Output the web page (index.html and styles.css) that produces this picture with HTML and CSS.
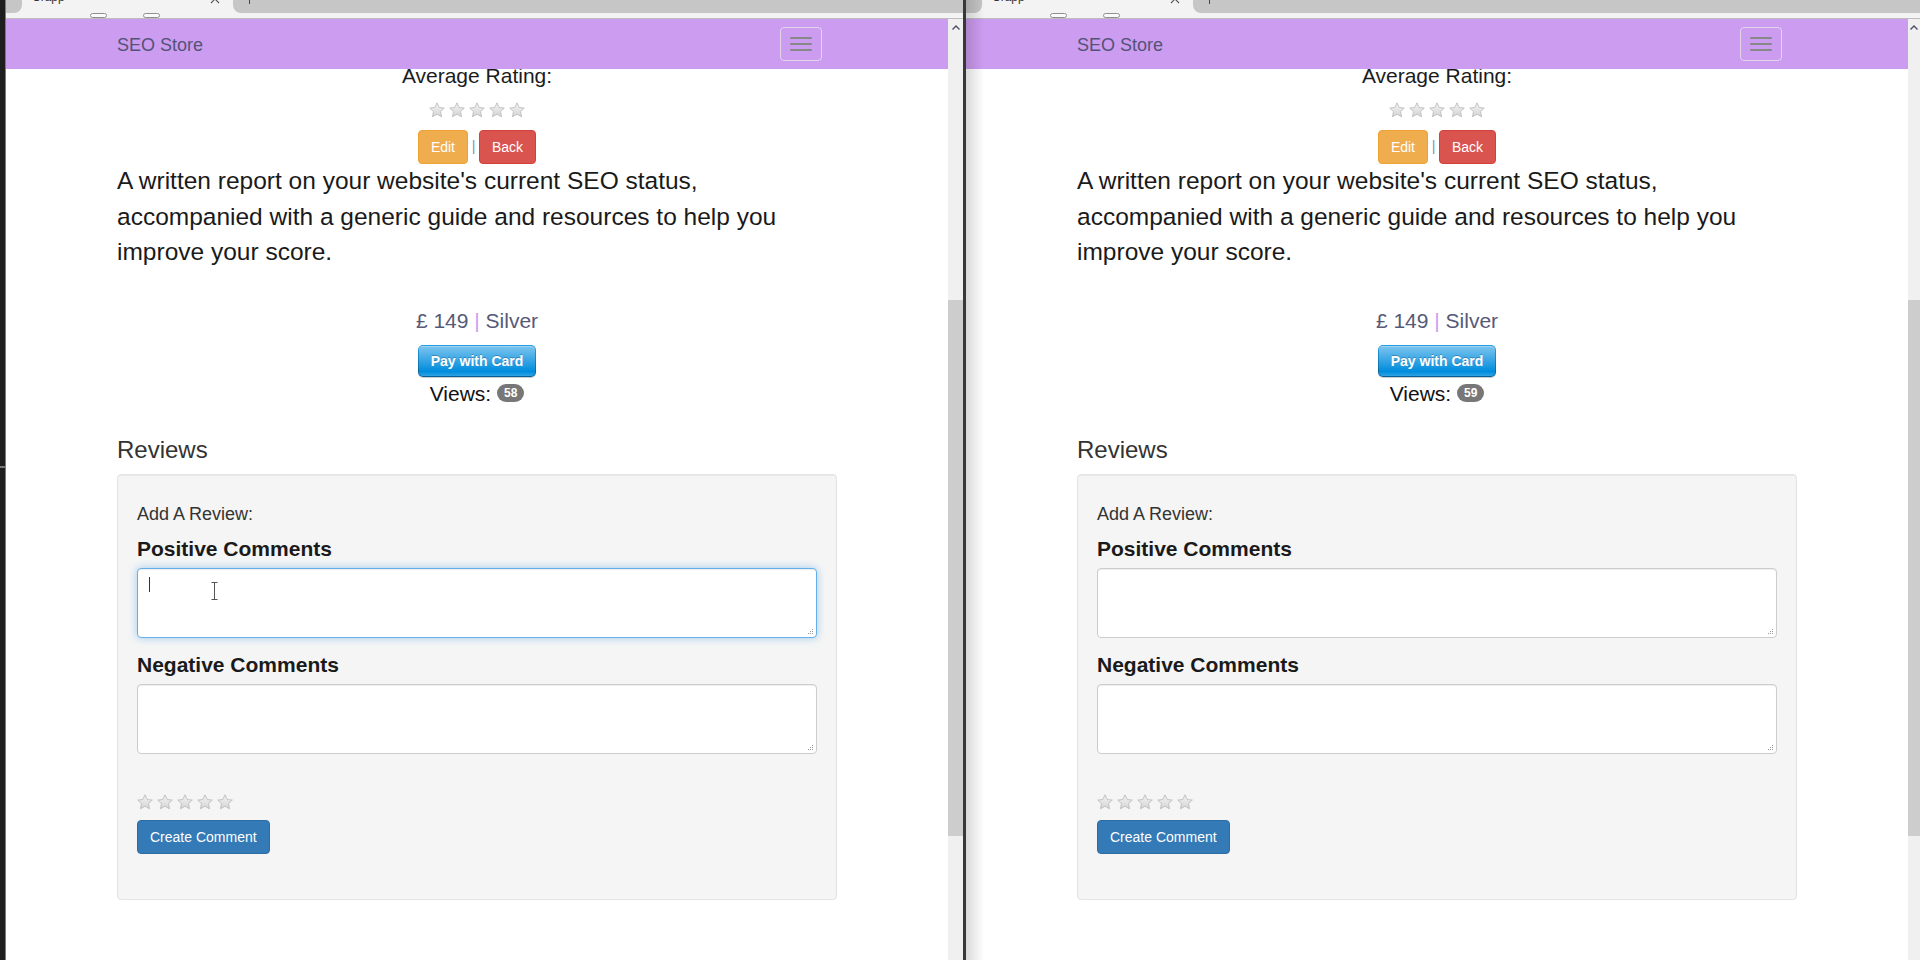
FILE: index.html
```html
<!DOCTYPE html>
<html lang="en">
<head>
<meta charset="utf-8">
<title>SEO Store</title>
<link rel="stylesheet" href="styles.css">
</head>
<body>
<svg class="sprite" width="0" height="0" aria-hidden="true">
  <defs>
    <linearGradient id="starfill" x1="0" y1="0" x2="0" y2="1">
      <stop offset="0" stop-color="#f4f4f4"/>
      <stop offset="1" stop-color="#d4d4d4"/>
    </linearGradient>
    <symbol id="star" viewBox="0 0 16 16">
      <polygon points="8,0.8 10.2,5.5 15.3,6.1 11.5,9.5 12.6,14.8 8,12.2 3.4,14.8 4.5,9.5 0.7,6.1 5.8,5.5" fill="url(#starfill)" stroke="#bdbdbd" stroke-width="0.9" stroke-linejoin="round"/>
    </symbol>
    <symbol id="grip" viewBox="0 0 7 7">
      <rect x="5" y="1" width="1" height="1" fill="#9a9a9a"/>
      <rect x="3" y="3" width="1" height="1" fill="#9a9a9a"/>
      <rect x="5" y="3" width="1" height="1" fill="#9a9a9a"/>
      <rect x="1" y="5" width="1" height="1" fill="#9a9a9a"/>
      <rect x="3" y="5" width="1" height="1" fill="#9a9a9a"/>
      <rect x="5" y="5" width="1" height="1" fill="#9a9a9a"/>
    </symbol>
  </defs>
</svg>

<div class="desktop">
  <!-- LEFT WINDOW -->
  <div class="win win-left">
    <div class="edge"></div>
    <div class="win-col">
      <div class="tabstrip">
        <div class="tabrow">
          <div class="tab-prev"></div>
          <div class="tab-active">
            <span class="tab-title">Crapp</span>
            <svg class="tab-close" width="10" height="10" viewBox="0 0 10 10"><path d="M1 1L9 9M9 1L1 9" stroke="#555" stroke-width="1.1"/></svg>
          </div>
          <div class="tab-rest"><span class="addr-caret"></span></div>
        </div>
        <div class="pillrow"><span class="pill"></span><span class="pill"></span></div>
      </div>
      <div class="body-row">
        <div class="viewport">
          <nav class="navbar">
            <div class="nav-inner">
              <span class="brand">SEO Store</span>
              <button class="toggle" aria-label="Toggle navigation"><span class="bar"></span><span class="bar"></span><span class="bar"></span></button>
            </div>
          </nav>
          <main class="page">
            <div class="container">
              <section class="summary">
                <p class="avg">Average Rating:</p>
                <div class="stars stars-center">
                  <svg class="star"><use href="#star"/></svg><svg class="star"><use href="#star"/></svg><svg class="star"><use href="#star"/></svg><svg class="star"><use href="#star"/></svg><svg class="star"><use href="#star"/></svg>
                </div>
                <div class="actions">
                  <a class="btn btn-warning">Edit</a><span class="pipe">|</span><a class="btn btn-danger">Back</a>
                </div>
              </section>
              <p class="desc">A written report on your website's current SEO status,<br>accompanied with a generic guide and resources to help you improve your score.</p>
              <section class="purchase">
                <p class="price">£ 149 <span class="sep">|</span> Silver</p>
                <button class="stripe-btn"><span>Pay with Card</span></button>
                <p class="views">Views: <span class="badge">58</span></p>
              </section>
              <h3 class="reviews-title">Reviews</h3>
              <div class="well">
                <p class="add-review">Add A Review:</p>
                <label class="field-label">Positive Comments</label>
                <div class="ta-wrap">
                  <textarea class="ta is-focused"></textarea>
                  <span class="caret"></span>
                  <svg class="ibeam" width="7" height="18" viewBox="0 0 7 18"><path d="M0.5 0.5H6.5M3.5 0.5V17.5M0.5 17.5H6.5" stroke="#555" stroke-width="1" fill="none"/></svg>
                  <svg class="grip"><use href="#grip"/></svg>
                </div>
                <label class="field-label field-gap">Negative Comments</label>
                <div class="ta-wrap">
                  <textarea class="ta"></textarea>
                  <svg class="grip"><use href="#grip"/></svg>
                </div>
                <div class="stars stars-left">
                  <svg class="star"><use href="#star"/></svg><svg class="star"><use href="#star"/></svg><svg class="star"><use href="#star"/></svg><svg class="star"><use href="#star"/></svg><svg class="star"><use href="#star"/></svg>
                </div>
                <button class="btn btn-primary create">Create Comment</button>
              </div>
            </div>
          </main>
        </div>
        <div class="scrollbar sb-left">
          <div class="sb-arrow"><svg width="8" height="5" viewBox="0 0 8 5"><path d="M0.5 4.5L4 1L7.5 4.5" stroke="#4d4d6a" stroke-width="1.4" fill="none"/></svg></div>
          <div class="sb-thumb"></div>
        </div>
      </div>
    </div>
  </div>

  <div class="divider"></div>

  <!-- RIGHT WINDOW -->
  <div class="win win-right">
    <div class="win-col">
      <div class="tabstrip">
        <div class="tabrow">
          <div class="tab-prev"></div>
          <div class="tab-active">
            <span class="tab-title">Crapp</span>
            <svg class="tab-close" width="10" height="10" viewBox="0 0 10 10"><path d="M1 1L9 9M9 1L1 9" stroke="#555" stroke-width="1.1"/></svg>
          </div>
          <div class="tab-rest"><span class="addr-caret"></span></div>
        </div>
        <div class="pillrow"><span class="pill"></span><span class="pill"></span></div>
      </div>
      <div class="body-row">
        <div class="viewport">
          <nav class="navbar">
            <div class="nav-inner">
              <span class="brand">SEO Store</span>
              <button class="toggle" aria-label="Toggle navigation"><span class="bar"></span><span class="bar"></span><span class="bar"></span></button>
            </div>
          </nav>
          <main class="page">
            <div class="container">
              <section class="summary">
                <p class="avg">Average Rating:</p>
                <div class="stars stars-center">
                  <svg class="star"><use href="#star"/></svg><svg class="star"><use href="#star"/></svg><svg class="star"><use href="#star"/></svg><svg class="star"><use href="#star"/></svg><svg class="star"><use href="#star"/></svg>
                </div>
                <div class="actions">
                  <a class="btn btn-warning">Edit</a><span class="pipe">|</span><a class="btn btn-danger">Back</a>
                </div>
              </section>
              <p class="desc">A written report on your website's current SEO status,<br>accompanied with a generic guide and resources to help you improve your score.</p>
              <section class="purchase">
                <p class="price">£ 149 <span class="sep">|</span> Silver</p>
                <button class="stripe-btn"><span>Pay with Card</span></button>
                <p class="views">Views: <span class="badge">59</span></p>
              </section>
              <h3 class="reviews-title">Reviews</h3>
              <div class="well">
                <p class="add-review">Add A Review:</p>
                <label class="field-label">Positive Comments</label>
                <div class="ta-wrap">
                  <textarea class="ta"></textarea>
                  <svg class="grip"><use href="#grip"/></svg>
                </div>
                <label class="field-label field-gap">Negative Comments</label>
                <div class="ta-wrap">
                  <textarea class="ta"></textarea>
                  <svg class="grip"><use href="#grip"/></svg>
                </div>
                <div class="stars stars-left">
                  <svg class="star"><use href="#star"/></svg><svg class="star"><use href="#star"/></svg><svg class="star"><use href="#star"/></svg><svg class="star"><use href="#star"/></svg><svg class="star"><use href="#star"/></svg>
                </div>
                <button class="btn btn-primary create">Create Comment</button>
              </div>
            </div>
          </main>
        </div>
        <div class="scrollbar sb-right">
          <div class="sb-arrow"><svg width="8" height="5" viewBox="0 0 8 5"><path d="M0.5 4.5L4 1L7.5 4.5" stroke="#4d4d6a" stroke-width="1.4" fill="none"/></svg></div>
          <div class="sb-thumb"></div>
        </div>
      </div>
    </div>
  </div>
</div>
</body>
</html>
```

FILE: styles.css
```css
* { box-sizing: border-box; }
html, body { margin: 0; padding: 0; }
body {
  width: 1920px;
  height: 960px;
  overflow: hidden;
  background: #1e1e1e;
  font-family: "Liberation Sans", Arial, Helvetica, sans-serif;
  font-size: 14px;
  line-height: 1.42857;
  color: #333;
}
.sprite { position: absolute; width: 0; height: 0; overflow: hidden; }

.desktop { display: flex; height: 960px; }
.win { display: flex; height: 100%; position: relative; background: #fff; }
.win-left { width: 963px; flex: none; }
.win-right { flex: 1; min-width: 0; }
.win-right::before {
  content: "";
  position: absolute;
  left: 0; top: 0; bottom: 0;
  width: 18px;
  background: linear-gradient(to right, rgba(0,0,0,0.15), rgba(0,0,0,0));
  z-index: 5;
  pointer-events: none;
}
.edge {
  width: 6px;
  flex: none;
  border-right: 1px solid #7b7b7b;
  background: linear-gradient(#1e1e1e 0, #1e1e1e 466px, #7a7a7a 466px, #7a7a7a 468px, #1e1e1e 468px);
}
.divider { width: 3px; flex: none; background: #383838; }
.win-col { flex: 1; min-width: 0; display: flex; flex-direction: column; }

/* browser tab strip (cut off at top) */
.tabstrip {
  height: 19px;
  flex: none;
  background: #f3f3f3;
  border-bottom: 1px solid #bdbdbd;
  display: flex;
  flex-direction: column;
}
.tabrow { height: 13px; display: flex; }
.tab-prev { width: 16px; background: #c6c6c6; border-bottom-right-radius: 8px; }
.tab-active {
  width: 211px;
  display: flex;
  justify-content: space-between;
  align-items: flex-start;
  overflow: hidden;
  padding: 0 13px 0 10px;
}
.tab-title { font-size: 12px; line-height: 12px; margin-top: -9px; color: #333; }
.tab-close { margin-top: -6px; }
.tab-rest { flex: 1; background: #c6c6c6; border-bottom-left-radius: 8px; padding-left: 16px; }
.addr-caret { display: block; width: 1px; height: 4px; background: #444; }
.pillrow { height: 5px; display: flex; gap: 36px; padding-left: 84px; }
.pill { width: 17px; height: 5px; border: 1px solid #8f8f8f; border-radius: 3px; background: #fbfbfb; }

.body-row { flex: 1; display: flex; min-height: 0; }
.viewport { width: 942px; flex: none; position: relative; overflow: hidden; background: #fff; }

/* scrollbars */
.scrollbar { flex: 1; background: #f0f0f0; display: flex; flex-direction: column; }
.sb-arrow { height: 17px; display: flex; justify-content: center; align-items: center; }
.sb-thumb { margin-top: 264px; height: 536px; background: #cdcdcd; }

/* navbar (fixed top, content scrolls beneath) */
.navbar {
  position: absolute;
  top: 0; left: 0; right: 0;
  height: 50px;
  background: #cc9cf1;
  z-index: 2;
}
.nav-inner {
  width: 720px;
  height: 100%;
  margin: 0 auto;
  display: flex;
  align-items: center;
  justify-content: space-between;
}
.brand { font-size: 18px; line-height: 20px; padding-top: 2px; color: #535377; }
.toggle {
  width: 42px;
  height: 34px;
  margin-right: 15px;
  padding: 0;
  border: 1px solid #e2d6ec;
  border-radius: 4px;
  background: transparent;
  display: flex;
  flex-direction: column;
  align-items: center;
  justify-content: center;
  gap: 4px;
}
.bar { display: block; width: 22px; height: 2px; border-radius: 1px; background: #888; }

/* page */
.page { padding-top: 42px; }
.container { width: 720px; margin: 0 auto; }

.summary { text-align: center; }
.avg { margin: 0; font-size: 21px; line-height: 30px; color: #1c1c1c; }
.stars { display: flex; gap: 4px; height: 16px; }
.stars-center { justify-content: center; margin-top: 11px; }
.star { width: 16px; height: 16px; display: block; }
.actions { display: flex; justify-content: center; align-items: center; margin-top: 12px; }
.pipe { width: 11px; text-align: center; font-size: 14px; color: #6f93bb; }

.btn {
  display: inline-block;
  padding: 6px 12px;
  font-family: inherit;
  font-size: 14px;
  line-height: 20px;
  border: 1px solid transparent;
  border-radius: 4px;
  color: #fff;
  text-decoration: none;
  cursor: pointer;
}
.btn-warning { background: #f0ad4e; border-color: #eea236; }
.btn-danger { background: #d9534f; border-color: #d43f3a; }
.btn-primary { background: #337ab7; border-color: #2e6da4; }

.desc { margin: -1px 0 0; font-size: 24.5px; line-height: 35.5px; color: #1a1a1a; }

.purchase { text-align: center; margin-top: 36px; }
.price { margin: 0; font-size: 21px; line-height: 30px; color: #565a78; }
.sep { color: #cc9cf1; }
.stripe-btn {
  display: inline-block;
  margin-top: 9px;
  padding: 1px;
  border: 0;
  border-radius: 5px;
  background: linear-gradient(#28a0e5, #015e94);
  box-shadow: 0 1px 0 rgba(0,0,0,0.2);
  cursor: pointer;
  vertical-align: top;
}
.stripe-btn span {
  display: block;
  height: 30px;
  padding: 0 12px;
  line-height: 30px;
  border-radius: 4px;
  background: linear-gradient(#7dc5ee, #008cdd 85%, #30a2e4);
  box-shadow: inset 0 1px 0 rgba(255,255,255,0.25);
  color: #fff;
  font-family: "Liberation Sans", Arial, sans-serif;
  font-size: 14px;
  font-weight: bold;
  text-shadow: 0 -1px 0 rgba(0,0,0,0.25);
}
.views { margin: 2px 0 0; font-size: 21px; line-height: 30px; color: #111; }
.badge {
  display: inline-block;
  padding: 3px 7px;
  font-size: 12px;
  font-weight: bold;
  line-height: 1;
  color: #fff;
  background: #777;
  border-radius: 10px;
  vertical-align: middle;
  position: relative;
  top: -2px;
}

.reviews-title { margin: 28px 0 0; font-size: 24px; line-height: 26px; font-weight: normal; color: #333; }

.well {
  margin-top: 11px;
  padding: 19px 19px 45px;
  background: #f5f5f5;
  border: 1px solid #e3e3e3;
  border-radius: 4px;
  box-shadow: inset 0 1px 1px rgba(0,0,0,0.05);
}
.add-review { margin: 7px 0 0; font-size: 18px; line-height: 26px; color: #333; }
.field-label { display: block; margin-top: 8px; font-size: 21px; line-height: 28px; font-weight: bold; color: #1a1a1a; }
.field-gap { margin-top: 13px; }
.ta-wrap { position: relative; margin-top: 5px; }
.ta {
  display: block;
  width: 100%;
  height: 70px;
  padding: 6px 12px;
  border: 1px solid #ccc;
  border-radius: 4px;
  background: #fff;
  box-shadow: inset 0 1px 1px rgba(0,0,0,0.075);
  font-family: inherit;
  font-size: 14px;
  resize: none;
  outline: none;
}
.ta.is-focused {
  border-color: #66afe9;
  box-shadow: inset 0 1px 1px rgba(0,0,0,0.075), 0 0 8px rgba(102,175,233,0.6);
}
.caret { position: absolute; left: 12px; top: 9px; width: 1px; height: 15px; background: #333; }
.ibeam { position: absolute; left: 74px; top: 14px; }
.grip { position: absolute; right: 3px; bottom: 3px; width: 7px; height: 7px; }

.stars-left { justify-content: flex-start; margin-top: 40px; }
.create { display: block; margin-top: 10px; }
```
